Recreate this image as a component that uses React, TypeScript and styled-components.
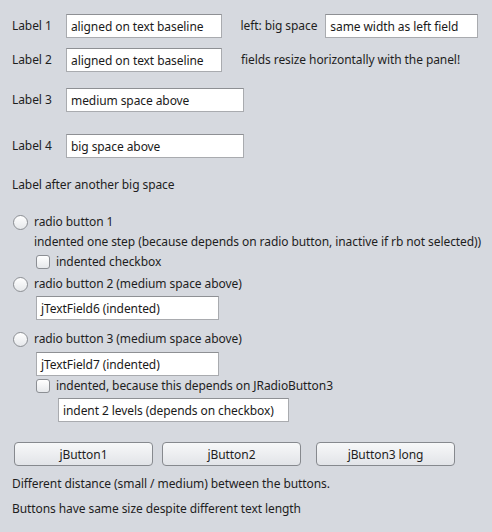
import React from "react";
import styled, { createGlobalStyle } from "styled-components";

const Global = createGlobalStyle`
  html, body { margin: 0; padding: 0; background: #d6d9df; }
  body { font-family: "Noto Sans", "Open Sans", sans-serif; font-size: 12px; color: #1e1e1e; letter-spacing: -0.08px; }
`;

const Panel = styled.div`
  width: 492px;
  height: 532px;
  box-sizing: border-box;
  padding: 14px 14px 0 12px;
  display: flex;
  flex-direction: column;
  background: #d6d9df;
`;

const Row = styled.div<{ $mt?: number; $indent?: number; $h?: number }>`
  display: flex;
  align-items: center;
  height: ${(p) => p.$h ?? 18}px;
  margin-top: ${(p) => p.$mt ?? 0}px;
  padding-left: ${(p) => p.$indent ?? 0}px;
  white-space: nowrap;
`;

const Label = styled.span<{ $w?: number; $ml?: number }>`
  display: inline-block;
  width: ${(p) => (p.$w ? `${p.$w}px` : "auto")};
  margin-left: ${(p) => p.$ml ?? 0}px;
  line-height: 18px;
`;

const Field = styled.div<{ $w: number }>`
  box-sizing: border-box;
  width: ${(p) => p.$w}px;
  height: 24px;
  background: #ffffff;
  border: 1px solid #a9abaf;
  border-top-color: #8e9094;
  padding: 0 4px;
  display: flex;
  align-items: center;
  color: #1a1a1a;
  overflow: hidden;
`;

const Radio = styled.span`
  box-sizing: border-box;
  width: 15px;
  height: 15px;
  border-radius: 50%;
  border: 1px solid #8c8f94;
  background: linear-gradient(#ffffff, #e6e8eb);
  margin: 0 6px 0 1px;
  flex: none;
`;

const Check = styled.span`
  box-sizing: border-box;
  width: 14px;
  height: 14px;
  border-radius: 3px;
  border: 1px solid #8c8f94;
  background: linear-gradient(#ffffff, #e6e8eb);
  margin-right: 6px;
  flex: none;
`;

const ButtonBar = styled.div`
  display: flex;
  margin-top: 20px;
  padding-left: 2px;
  height: 24px;
`;

const Button = styled.button<{ $ml?: number }>`
  box-sizing: border-box;
  width: 139px;
  height: 24px;
  margin-left: ${(p) => p.$ml ?? 0}px;
  border: 1px solid #86898e;
  border-radius: 4px;
  background: linear-gradient(#f7f8f9, #e2e4e8);
  font-family: inherit;
  font-size: 12px;
  letter-spacing: inherit;
  color: #1e1e1e;
  padding: 0;
`;

export default function App() {
  return (
    <>
      <Global />
      <Panel>
        <Row $h={24}>
          <Label $w={54}>Label 1</Label>
          <Field $w={156}>aligned on text baseline</Field>
          <Label $ml={19} $w={85}>left: big space</Label>
          <Field $w={153}>same width as left field</Field>
        </Row>
        <Row $h={24} $mt={10}>
          <Label $w={54}>Label 2</Label>
          <Field $w={156}>aligned on text baseline</Field>
          <Label $ml={19}>fields resize horizontally with the panel!</Label>
        </Row>
        <Row $h={24} $mt={16}>
          <Label $w={54}>Label 3</Label>
          <Field $w={178}>medium space above</Field>
        </Row>
        <Row $h={24} $mt={22}>
          <Label $w={54}>Label 4</Label>
          <Field $w={178}>big space above</Field>
        </Row>
        <Row $mt={18}>
          <Label>Label after another big space</Label>
        </Row>
        <Row $mt={19}>
          <Radio />
          <Label>radio button 1</Label>
        </Row>
        <Row $mt={2} $indent={22}>
          <Label>indented one step (because depends on radio button, inactive if rb not selected))</Label>
        </Row>
        <Row $mt={2} $indent={24}>
          <Check />
          <Label>indented checkbox</Label>
        </Row>
        <Row $mt={4}>
          <Radio />
          <Label>radio button 2 (medium space above)</Label>
        </Row>
        <Row $h={24} $mt={3} $indent={24}>
          <Field $w={183}>jTextField6 (indented)</Field>
        </Row>
        <Row $mt={10}>
          <Radio />
          <Label>radio button 3 (medium space above)</Label>
        </Row>
        <Row $h={24} $mt={4} $indent={24}>
          <Field $w={183}>jTextField7 (indented)</Field>
        </Row>
        <Row $mt={1} $indent={24}>
          <Check />
          <Label>indented, because this depends on JRadioButton3</Label>
        </Row>
        <Row $h={24} $mt={3} $indent={46}>
          <Field $w={231}>indent 2 levels (depends on checkbox)</Field>
        </Row>
        <ButtonBar>
          <Button>jButton1</Button>
          <Button $ml={9}>jButton2</Button>
          <Button $ml={15}>jButton3 long</Button>
        </ButtonBar>
        <Row $mt={9}>
          <Label>Different distance (small / medium) between the buttons.</Label>
        </Row>
        <Row $mt={7}>
          <Label>Buttons have same size despite different text length</Label>
        </Row>
      </Panel>
    </>
  );
}
